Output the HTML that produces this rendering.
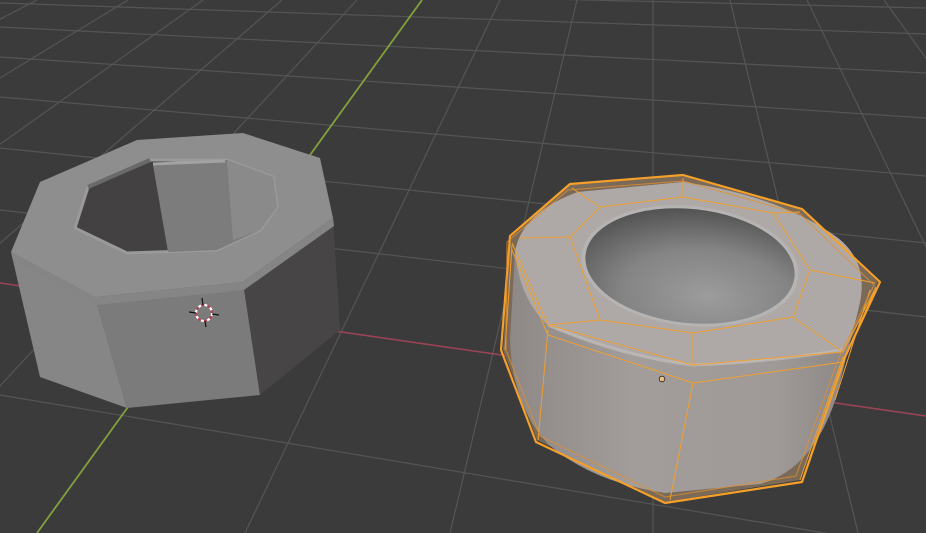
<!DOCTYPE html>
<html><head><meta charset="utf-8"><style>
html,body{margin:0;padding:0;background:#3b3b3b;width:926px;height:533px;overflow:hidden}
svg{display:block}
</style></head><body>
<svg width="926" height="533" viewBox="0 0 926 533" xmlns="http://www.w3.org/2000/svg">
<defs>
<radialGradient id="hole" cx="0.6" cy="0.75" r="0.75">
<stop offset="0" stop-color="#9c9c9c"/><stop offset="0.55" stop-color="#848484"/><stop offset="1" stop-color="#555555"/>
</radialGradient>
<linearGradient id="side" x1="0" y1="0" x2="1" y2="0">
<stop offset="0" stop-color="#8e8986"/><stop offset="0.35" stop-color="#a29d9a"/><stop offset="0.75" stop-color="#9f9a97"/><stop offset="1" stop-color="#8a8482"/>
</linearGradient>
</defs>
<rect width="926" height="533" fill="#3b3b3b"/>
<g stroke="#555" stroke-width="1.2" fill="none">
<line x1="37" y1="0" x2="-989" y2="533"/>
<line x1="128" y1="0" x2="-747" y2="533"/>
<line x1="203" y1="0" x2="-547" y2="533"/>
<line x1="282" y1="0" x2="-336" y2="533"/>
<line x1="357" y1="0" x2="-136" y2="533"/>
<line x1="500" y1="0" x2="245" y2="533"/>
<line x1="577" y1="0" x2="450" y2="533"/>
<line x1="653" y1="0" x2="653" y2="533"/>
<line x1="730" y1="0" x2="858" y2="533"/>
<line x1="807" y1="0" x2="1064" y2="533"/>
<line x1="884" y1="0" x2="1269" y2="533"/>
<line x1="0" y1="-14" x2="926" y2="8"/>
<line x1="0" y1="3" x2="926" y2="34"/>
<line x1="0" y1="27" x2="926" y2="73"/>
<line x1="0" y1="57" x2="926" y2="118"/>
<line x1="0" y1="97" x2="926" y2="176"/>
<line x1="0" y1="148" x2="926" y2="243"/>
<line x1="0" y1="210" x2="926" y2="317"/>
<line x1="0" y1="395" x2="926" y2="550"/>
</g>
<line x1="0" y1="283" x2="926" y2="416" stroke="#9a4455" stroke-width="1.6"/>
<line x1="422" y1="0" x2="37" y2="533" stroke="#84a13a" stroke-width="1.8"/>

<!-- left object -->
<polygon points="11,252 95,297 127,408 40,377" fill="#868686"/>
<polygon points="95,297 243,282 260,395 127,408" fill="#7b7b7b"/>
<polygon points="243,282 333,218 340,330 260,395" fill="#474545"/>
<polygon points="11,252 40,182 137,140 243,133 320,158 333,218 243,282 95,297" fill="#8e8e8e"/>
<polygon points="11,252 95,297 243,282 333,218 334,226 244,290 96,305 13,260" fill="#858585"/>
<polygon points="75,228 88,187 150,160 227,160 273,177 277,207 260,230 217,250 127,253" fill="#434141" stroke="#9a9a9a" stroke-width="3"/>
<polygon points="153,165 227,160 273,177 277,207 260,230 217,250 168,252" fill="#7c7c7c"/>
<polygon points="227,160 273,177 277,207 260,230 233,240" fill="#8a8a8a"/>
<line x1="88" y1="187" x2="150" y2="160" stroke="#6a6a6a" stroke-width="4"/>
<line x1="153" y1="164" x2="225" y2="161" stroke="#a2a2a2" stroke-width="3"/>
<g transform="translate(204,313)">
<circle r="8" fill="none" stroke="#b04455" stroke-width="2.2"/>
<circle r="8" fill="none" stroke="#fff" stroke-width="2.2" stroke-dasharray="3 3.3"/>
<g stroke="#111" stroke-width="1.2">
<line x1="-15" y1="-1" x2="-8" y2="0"/><line x1="8" y1="1" x2="15" y2="2"/>
<line x1="-2" y1="-15" x2="-1" y2="-8"/><line x1="1" y1="8" x2="2" y2="14"/>
</g>
</g>

<!-- right object -->
<polygon points="510,238 570,185 683,176 802,210 878,282 843,357 800,480 665,502 537,440 503,350" fill="#7c6a58"/>
<path d="M515,252 Q522,212 578,192 L683,182 Q780,196 838,238 Q868,262 860,302 L836,398 Q812,470 760,484 L665,493 Q592,482 548,444 Q512,405 510,340 Z" fill="url(#side)"/>
<path d="M515,252 Q522,212 578,192 L683,182 Q780,196 838,238 Q868,262 860,302 Q852,340 843,350 Q770,362 693,365 Q610,352 548,325 Q520,300 515,252 Z" fill="#aea9a7"/>
<path d="M548,325 Q620,356 693,365 Q770,362 843,350" fill="none" stroke="#c9c5c3" stroke-width="3" opacity="0.6"/>
<ellipse cx="690" cy="266" rx="109" ry="60" transform="rotate(6 690 266)" fill="#b5b4b3"/>
<ellipse cx="690" cy="266" rx="105" ry="57" transform="rotate(6 690 266)" fill="url(#hole)"/>
<g fill="none" stroke="#f0a030" stroke-width="1">
<polygon points="570,237 600,207 683,197 773,213 810,270 793,317 693,333 600,320"/>
<line x1="570" y1="237" x2="520" y2="238"/><line x1="600" y1="207" x2="572" y2="188"/>
<line x1="683" y1="197" x2="683" y2="178"/><line x1="773" y1="213" x2="800" y2="212"/>
<line x1="810" y1="270" x2="875" y2="283"/><line x1="793" y1="317" x2="843" y2="352"/>
<line x1="693" y1="333" x2="693" y2="365"/><line x1="600" y1="320" x2="548" y2="325"/>
<polyline points="512,243 548,325 693,365 843,352 876,287"/>
<polyline points="512,250 548,335 693,383 843,362 874,292"/>
<line x1="548" y1="330" x2="538" y2="440"/>
<line x1="693" y1="383" x2="670" y2="500"/>
<line x1="843" y1="357" x2="800" y2="480"/>
<line x1="512" y1="245" x2="505" y2="350"/>
<line x1="870" y1="290" x2="835" y2="400"/>
</g>
<polygon points="510,236 570,184 683,175 802,209 880,282 845,357 802,482 665,503 536,442 501,350" fill="none" stroke="#f5a02a" stroke-width="2.2" stroke-linejoin="round"/>
<polygon points="507,242 568,190 683,181 800,214 874,285 838,360 796,476 665,497 540,436 506,350" fill="none" stroke="#e09030" stroke-width="1" opacity="0.8"/>
<circle cx="662" cy="379" r="2.8" fill="#f0c080" stroke="#222" stroke-width="0.8"/>
</svg>
</body></html>
